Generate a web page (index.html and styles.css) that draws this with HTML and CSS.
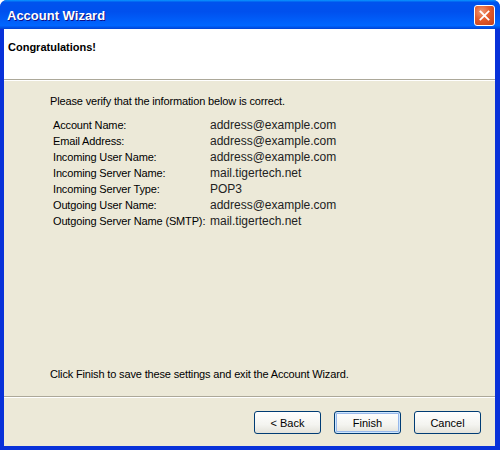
FILE: index.html
```html
<!DOCTYPE html>
<html lang="en">
<head>
    <meta charset="UTF-8">
    <title>Account Wizard</title>
    <link rel="stylesheet" href="styles.css">
</head>
<body>

<div class="window">
    <div class="titlebar">
        <span class="title">Account Wizard</span>
        <span class="close-btn">
            <svg width="21" height="21" viewBox="0 0 21 21">
                <path d="M6 6 L15 15 M15 6 L6 15" stroke="#fff" stroke-width="2" stroke-linecap="square"/>
            </svg>
        </span>
    </div>

    <div class="frame">
        <div class="header">
            <h2>Congratulations!</h2>
        </div>

        <div class="content">
            <p class="intro">Please verify that the information below is correct.</p>

            <div class="summary">
                <span class="label">Account Name:</span>
                <span class="value">address@example.com</span>
                <span class="label">Email Address:</span>
                <span class="value">address@example.com</span>
                <span class="label">Incoming User Name:</span>
                <span class="value">address@example.com</span>
                <span class="label">Incoming Server Name:</span>
                <span class="value">mail.tigertech.net</span>
                <span class="label">Incoming Server Type:</span>
                <span class="value">POP3</span>
                <span class="label">Outgoing User Name:</span>
                <span class="value">address@example.com</span>
                <span class="label">Outgoing Server Name (SMTP):</span>
                <span class="value">mail.tigertech.net</span>
            </div>

            <p class="outro">Click Finish to save these settings and exit the Account Wizard.</p>
        </div>

        <div class="buttons">
            <button type="button">&lt; Back</button>
            <button type="button" class="default">Finish</button>
            <button type="button">Cancel</button>
        </div>
    </div>
</div>

</body>
</html>
```

FILE: styles.css
```css
html, body {
    margin: 0;
    padding: 0;
}

body {
    font-family: "Liberation Sans", Arial, sans-serif;
    font-size: 11px;
    color: #000;
}

.window {
    width: 500px;
    height: 450px;
    box-sizing: border-box;
    display: flex;
    flex-direction: column;
    background: #0831d9;
    border-radius: 7px 7px 0 0;
    overflow: hidden;
}

.titlebar {
    height: 29px;
    flex-shrink: 0;
    display: flex;
    align-items: center;
    justify-content: space-between;
    padding: 0 5px 0 7px;
    background: linear-gradient(to bottom, #0997ff 0%, #0053ee 8%, #0050ee 40%, #0066ff 88%, #0055ea 94%, #0042d4 100%);
}

.title {
    color: #fff;
    font-weight: bold;
    font-size: 13px;
    text-shadow: 1px 1px #0f1089;
    padding-top: 1px;
}

.close-btn {
    width: 21px;
    height: 21px;
    border: 1px solid #fff;
    border-radius: 3px;
    background: radial-gradient(circle at 35% 30%, #f09a75 0%, #e35b2c 45%, #c1401c 100%);
    display: flex;
    box-sizing: border-box;
    align-items: center;
    justify-content: center;
    margin-top: 1px;
}

.close-btn svg {
    width: 19px;
    height: 19px;
}

.frame {
    flex: 1;
    display: flex;
    flex-direction: column;
    margin: 0 5px 4px 4px;
    background: #ece9d8;
}

.header {
    height: 50px;
    background: #fff;
    border-bottom: 1px solid #aca899;
    box-shadow: 0 1px 0 #fff;
    padding: 0 4px;
}

.header h2 {
    margin: 12px 0 0 0;
    font-size: 11px;
    font-weight: bold;
}

.content {
    flex: 1;
    display: flex;
    flex-direction: column;
    padding: 0 0 0 46px;
    border-bottom: 1px solid #aca899;
    letter-spacing: -0.15px;
}

.intro {
    margin: 15px 0 0 0;
}

.summary {
    display: grid;
    grid-template-columns: 157px auto;
    margin: 11px 0 0 3px;
    row-gap: 2px;
}

.label {
    line-height: 14px;
}

.value {
    font-size: 12px;
    color: #222;
    line-height: 14px;
    letter-spacing: 0;
}

.outro {
    margin: auto 0 16px 0;
}

.buttons {
    height: 49px;
    box-sizing: border-box;
    flex-shrink: 0;
    box-shadow: inset 0 1px 0 #fff;
    display: flex;
    justify-content: flex-end;
    align-items: flex-start;
    gap: 13px;
    padding: 14px 14px 0 0;
}

button {
    width: 67px;
    height: 23px;
    font-family: "Liberation Sans", Arial, sans-serif;
    font-size: 11px;
    color: #000;
    border: 1px solid #003c74;
    border-radius: 3px;
    background: linear-gradient(to bottom, #fff 0%, #f4f4f0 60%, #e3e2da 100%);
    padding: 0;
    cursor: pointer;
}

button.default {
    box-shadow: inset 0 0 0 1px #cee7ff, inset 0 0 0 2px #98b8ea;
}
```
